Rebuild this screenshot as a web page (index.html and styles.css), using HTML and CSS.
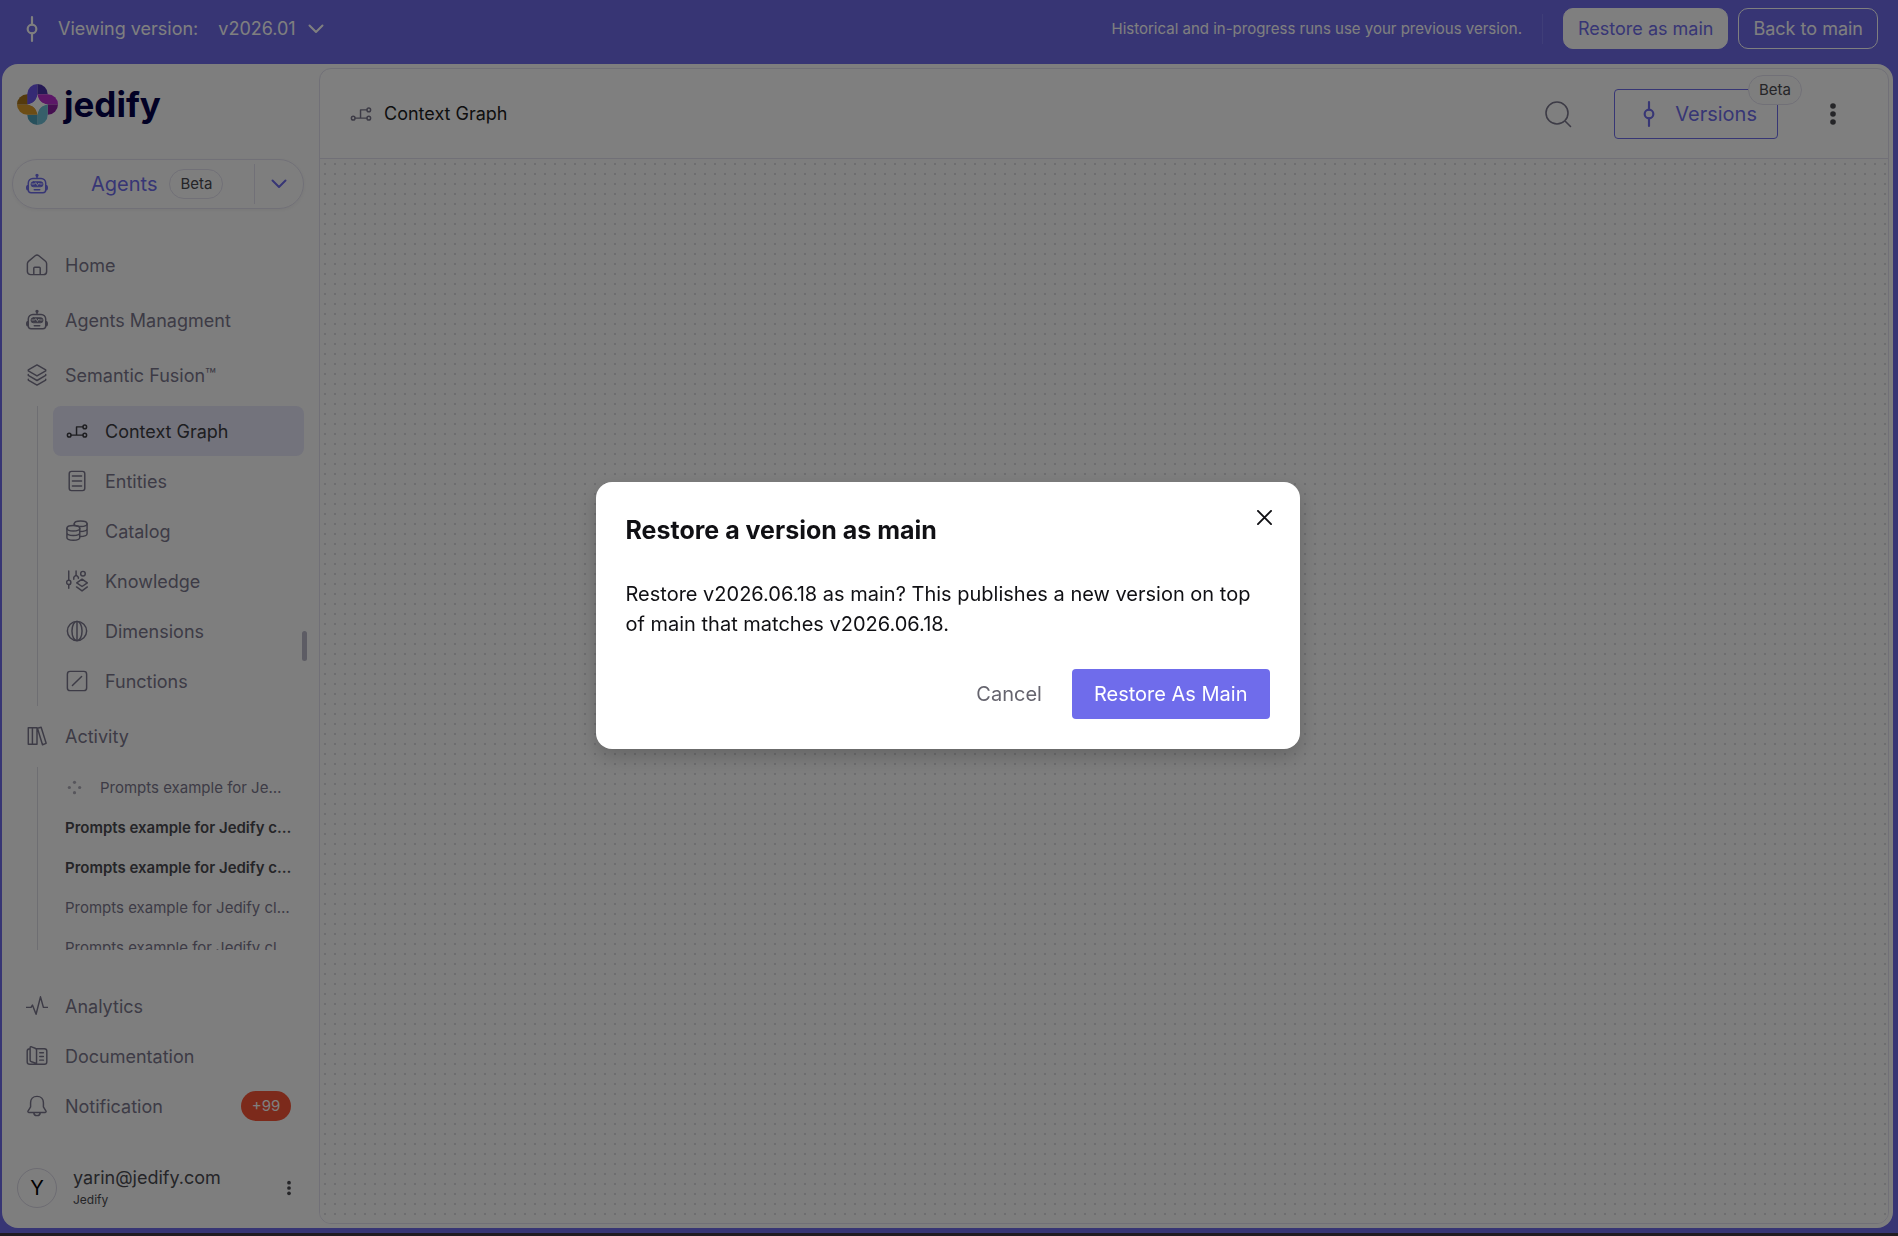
FILE: index.html
```html
<!DOCTYPE html>
<html lang="en">
<head>
<meta charset="utf-8">
<meta name="viewport" content="width=device-width, initial-scale=1">
<title>Jedify – Context Graph</title>
<link rel="stylesheet" href="styles.css">
</head>
<body>
<svg class="sprite" aria-hidden="true">
  <symbol id="i-commit" viewBox="0 0 24 24"><circle cx="12" cy="12" r="4"/><path d="M12 1v7M12 16v7"/></symbol>
  <symbol id="i-chevron" viewBox="0 0 16 10"><path d="M1.500 1.500 8 8l6.500-6.500"/></symbol>
  <symbol id="i-robot" viewBox="0 0 24 24"><circle cx="12" cy="2.500" r="1" fill="currentColor"/><path d="M12 3v3M7.500 6h9a5 5 0 0 1 5 5v7.500a3 3 0 0 1-3 3h-13a3 3 0 0 1-3-3V11a5 5 0 0 1 5-5zM2.500 13.500C.8 13.500.8 14.500.8 16s0 2.500 1.700 2.500M21.500 13.500c1.700 0 1.700 1 1.700 2.500s0 2.500-1.700 2.500M9 18.300h6"/><rect x="5.500" y="9.500" width="13" height="5.500" rx="2.500" fill="currentColor" stroke-width="1"/><path class="cut" d="M6.500 12h3l1.200-1.500 1.800 3 1.400-2.500.8 1h2.800"/></symbol>
  <symbol id="i-home" viewBox="0 0 24 24"><path d="M1.500 10.500c0-1.200.5-2 1.500-2.800l7-5.800c1.300-1 2.700-1 4 0l7 5.800c1 .8 1.500 1.600 1.500 2.800V19a3.500 3.500 0 0 1-3.500 3.500H5A3.500 3.500 0 0 1 1.500 19zM8.500 22.500v-7a1 1 0 0 1 1-1h5a1 1 0 0 1 1 1v7"/></symbol>
  <symbol id="i-layers" viewBox="0 0 24 24"><path d="M12 1 21.500 6.500v1L12 13 2.500 7.500v-1zM2.500 11.500v1L12 18l9.500-5.500v-1M2.500 16.500v1L12 23l9.500-5.500v-1"/></symbol>
  <symbol id="i-graph" viewBox="0 0 24 24"><circle cx="3.500" cy="16.500" r="2"/><circle cx="20.500" cy="16.500" r="2"/><circle cx="20.500" cy="7.500" r="2"/><path d="M5.500 16.500h13M11.500 16.500v-9h7"/></symbol>
  <symbol id="i-doc" viewBox="0 0 24 24"><rect x="3.500" y="1.500" width="17" height="21" rx="2.500"/><path d="M7 6.500h10M7 12h10M7 17.500h10"/></symbol>
  <symbol id="i-catalog" viewBox="0 0 24 24"><ellipse cx="8" cy="9" rx="7" ry="3"/><path d="M1 9v10c0 1.700 3 3 7 3s7-1.300 7-3V9M1 14c0 1.700 3 3 7 3s7-1.300 7-3M9 6V4"/><ellipse cx="16" cy="4" rx="7" ry="3"/><path d="M23 4v11c0 1.600-3 3-8 3M23 9.500c0 1.600-3 3-8 3"/></symbol>
  <symbol id="i-knowledge" viewBox="0 0 24 24"><path d="M3 1v10M3 16v4M11 1v4M8.500 10V8L11 5.500 13.500 8v1"/><circle cx="3" cy="13.500" r="2.300"/><circle cx="18.500" cy="4" r="2.500"/><path d="M17.500 10l5.800 4-5.800 4-5.800-4zM11.500 18.500l6 4.300 5.800-4.300"/></symbol>
  <symbol id="i-globe" viewBox="0 0 24 24"><circle cx="12" cy="12" r="10.500"/><ellipse cx="12" cy="12" rx="5.500" ry="10.500"/><path d="M12 1.500v21"/></symbol>
  <symbol id="i-function" viewBox="0 0 24 24"><rect x="1.500" y="1.500" width="21" height="21" rx="3"/><path d="M7 17 17 7"/></symbol>
  <symbol id="i-books" viewBox="0 0 24 24"><path d="M2.500 3h4.500v18H2.500zM7 3h5v18H7zM12.500 3.500l4-1 5.500 17.500-4 1.500z"/></symbol>
  <symbol id="i-dots4" viewBox="0 0 16 16"><g class="solid"><circle cx="8" cy="2.500" r="1.700"/><circle cx="8" cy="13.500" r="1.700"/><circle cx="2.500" cy="8" r="1.700"/><circle cx="13.500" cy="8" r="1.700"/></g></symbol>
  <symbol id="i-pulse" viewBox="0 0 24 24"><path d="M.500 13.500h5l1.500-2.500 4 10L15.800 2l3.200 11.500h4.500"/></symbol>
  <symbol id="i-docs" viewBox="0 0 24 24"><path d="M5 2h1l4 1.500c1 .4 1.500 1 1.500 2V20l-5.500-1.700C5 18 4.500 17.500 4.500 16.500V3c0-.6 0-1 .5-1zM4.500 4c-2 0-3.200 1-3.200 2.500v12c0 1.500 1.200 2.500 3 2.500H20c1.600 0 2.700-1 2.700-2.500v-12C22.700 5 21.600 4 20 4h-8.500M15 8.500h4M15 12.500h4M15 16.500h4"/></symbol>
  <symbol id="i-bell" viewBox="0 0 24 24"><path d="M12 1.500c-4.500 0-7 3.300-7 7v4.500l-2.800 4.500c-.4.800 0 1.500.8 1.500h18c.8 0 1.200-.7.8-1.500L19 13V8.500c0-3.700-2.500-7-7-7zM8.500 19c0 2 1.500 3.500 3.500 3.500s3.500-1.500 3.500-3.500"/></symbol>
  <symbol id="i-kebab" viewBox="0 0 8 24"><g class="solid"><circle cx="4" cy="4" r="2.800"/><circle cx="4" cy="12" r="2.800"/><circle cx="4" cy="20" r="2.800"/></g></symbol>
  <symbol id="i-search" viewBox="0 0 28 28"><circle cx="13" cy="13" r="11"/><path d="m21.500 21.500 5 5"/></symbol>
  <symbol id="i-close" viewBox="0 0 16 16"><path d="m1 1 14 14M15 1 1 15"/></symbol>
</svg>

<div class="app">
  <header class="banner">
    <svg class="icon commit"><use href="#i-commit"/></svg>
    <span class="banner-label">Viewing version:</span>
    <button class="version-pick" type="button">v2026.01 <svg class="chevron"><use href="#i-chevron"/></svg></button>
    <p class="banner-note">Historical and in-progress runs use your previous version.</p>
    <button class="banner-btn filled" type="button">Restore as main</button>
    <button class="banner-btn" type="button">Back to main</button>
  </header>

  <div class="shell">
    <aside class="sidebar">
      <a class="logo" href="#" aria-label="jedify">
        <svg class="logo-mark" viewBox="0 0 40 40">
          <path fill="#6b55e8" d="M10 20V10a10 10 0 0 1 10-10v10z"/>
          <path fill="#4a33a8" d="M20 0a10 10 0 0 1 10 10H20z"/>
          <path fill="#6b55e8" d="M10 20V10h10c0 5-4 10-10 10z"/>
          <path fill="#b92fce" d="M20 10h10a10 10 0 0 1 10 10H30c-5 0-10-4-10-10z"/>
          <path fill="#8a1fa0" d="M40 20a10 10 0 0 1-10 10V20z"/>
          <path fill="#6fbfd4" d="M30 20v10a10 10 0 0 1-10 10V30c0-6 4-10 10-10z"/>
          <path fill="#4fa0b8" d="M20 40a10 10 0 0 1-10-10h10z"/>
          <path fill="#d89a2b" d="M20 30H10A10 10 0 0 1 0 20h10c5 0 10 4 10 10z"/>
          <path fill="#a8741a" d="M0 20a10 10 0 0 1 10-10v10z"/>
          <path fill="#fff" d="M20 10c1 6 4 9 10 10-6 1-9 4-10 10-1-6-4-9-10-10 6-1 9-4 10-10z"/>
        </svg>
        <span>jedify</span>
      </a>

      <div class="agents">
        <button class="agents-main" type="button"><svg class="icon"><use href="#i-robot"/></svg><span class="agents-label">Agents</span><span class="beta">Beta</span></button>
        <button class="agents-more" type="button" aria-label="More agents"><svg class="chevron"><use href="#i-chevron"/></svg></button>
      </div>

      <nav class="nav">
        <a class="row" href="#"><svg class="icon"><use href="#i-home"/></svg>Home</a>
        <a class="row" href="#"><svg class="icon"><use href="#i-robot"/></svg>Agents Managment</a>
        <a class="row" href="#"><svg class="icon"><use href="#i-layers"/></svg>Semantic Fusion™</a>
        <div class="sub">
          <a class="row active" href="#"><svg class="icon"><use href="#i-graph"/></svg>Context Graph</a>
          <a class="row" href="#"><svg class="icon"><use href="#i-doc"/></svg>Entities</a>
          <a class="row" href="#"><svg class="icon"><use href="#i-catalog"/></svg>Catalog</a>
          <a class="row" href="#"><svg class="icon"><use href="#i-knowledge"/></svg>Knowledge</a>
          <a class="row" href="#"><svg class="icon"><use href="#i-globe"/></svg>Dimensions</a>
          <a class="row" href="#"><svg class="icon"><use href="#i-function"/></svg>Functions</a>
        </div>
        <a class="row" href="#"><svg class="icon"><use href="#i-books"/></svg>Activity</a>
        <div class="history">
          <a class="prompt pending" href="#"><svg class="spinner"><use href="#i-dots4"/></svg><span>Prompts example for Jedify clients</span></a>
          <a class="prompt unread" href="#"><span>Prompts example for Jedify clients</span></a>
          <a class="prompt unread" href="#"><span>Prompts example for Jedify clients</span></a>
          <a class="prompt" href="#"><span>Prompts example for Jedify clients</span></a>
          <a class="prompt" href="#"><span>Prompts example for Jedify clients</span></a>
        </div>
      </nav>

      <nav class="nav-foot">
        <a class="row" href="#"><svg class="icon"><use href="#i-pulse"/></svg>Analytics</a>
        <a class="row" href="#"><svg class="icon"><use href="#i-docs"/></svg>Documentation</a>
        <a class="row" href="#"><svg class="icon"><use href="#i-bell"/></svg>Notification<span class="count">+99</span></a>
      </nav>

      <div class="user">
        <span class="avatar">Y</span>
        <div class="user-text"><strong>yarin@jedify.com</strong><small>Jedify</small></div>
        <button class="kebab small" type="button" aria-label="Account menu"><svg><use href="#i-kebab"/></svg></button>
      </div>
      <span class="resize-handle"></span>
    </aside>

    <main class="panel">
      <header class="panel-head">
        <svg class="icon"><use href="#i-graph"/></svg>
        <h1>Context Graph</h1>
        <button class="search" type="button" aria-label="Search"><svg><use href="#i-search"/></svg></button>
        <button class="versions" type="button"><svg class="icon commit"><use href="#i-commit"/></svg>Versions<span class="beta">Beta</span></button>
        <button class="kebab" type="button" aria-label="More"><svg><use href="#i-kebab"/></svg></button>
      </header>
      <div class="canvas"></div>
    </main>
  </div>
  <div class="edge"></div>
</div>

<div class="overlay">
  <section class="dialog" role="dialog" aria-modal="true" aria-labelledby="dialog-title">
    <button class="close" type="button" aria-label="Close"><svg><use href="#i-close"/></svg></button>
    <h2 id="dialog-title">Restore a version as main</h2>
    <p>Restore v2026.06.18 as main? This publishes a new version on top of main that matches v2026.06.18.</p>
    <div class="dialog-actions">
      <button class="cancel" type="button">Cancel</button>
      <button class="confirm" type="button">Restore As Main</button>
    </div>
  </section>
</div>
</body>
</html>
```
FILE: styles.css
```css
:root {
  --purple: #6f6ceb;
  --banner: #6e6ae8;
  --muted: #7a778c;
  --line: #e2e0ee;
  --ink: #4a4a50;
}

* { box-sizing: border-box; }

body {
  margin: 0;
  font-family: Inter, "Liberation Sans", sans-serif;
  font-size: 18px;
  color: var(--muted);
}

h1, h2, p { margin: 0; font-weight: 400; }
a { color: inherit; text-decoration: none; }

button {
  font: inherit;
  color: inherit;
  background: none;
  border: 0;
  padding: 0;
}

svg {
  display: block;
  flex: none;
  fill: none;
  stroke: currentColor;
  stroke-width: 1.6;
  stroke-linecap: round;
  stroke-linejoin: round;
}

.sprite { position: absolute; width: 0; height: 0; }
.solid { fill: currentColor; stroke: none; }
.cut { stroke: #fff; stroke-width: 1; }
.icon { width: 22px; height: 22px; }
.icon.commit { width: 26px; height: 26px; stroke-width: 2; }
.chevron { width: 16px; height: 10px; stroke-width: 2; }

.app {
  height: 100vh;
  display: flex;
  flex-direction: column;
  background: var(--banner);
}

.edge { height: 3px; background: #201c22; margin-top: 5px; }

/* version banner */
.banner {
  display: flex;
  align-items: center;
  padding: 8px 20px 15px 19px;
  color: #fff;
}

.banner-label { margin: 0 20px 0 13px; }
.version-pick { display: flex; align-items: center; gap: 12px; }

.banner-note {
  margin-left: auto;
  padding-right: 20px;
  border-right: 1px solid #7f7cf0;
  line-height: 30px;
  font-size: 15px;
}

.banner-btn {
  height: 41px;
  padding: 0 14px;
  margin-left: 10px;
  border: 1px solid #fff;
  border-radius: 10px;
}

.banner-btn.filled { margin-left: 20px; background: #fff; color: var(--purple); }

/* shell */
.shell {
  flex: 1;
  min-height: 0;
  display: flex;
  margin: 0 5px 0 2px;
  padding: 4px 4px 4px 0;
  background: #fdfdfd;
  border-radius: 16px;
}

.sidebar {
  position: relative;
  width: 317px;
  flex: none;
  display: flex;
  flex-direction: column;
  padding: 15px 15px 0 10px;
}

.logo {
  display: flex;
  align-items: center;
  gap: 6px;
  height: 42px;
  padding-left: 5px;
  font-size: 35px;
  font-weight: 700;
  line-height: 38px;
  color: #04024a;
}

.logo-mark { width: 41px; height: 41px; stroke: none; }

.agents {
  display: flex;
  align-items: center;
  height: 50px;
  margin-top: 34px;
  border: 1px solid var(--line);
  border-radius: 25px;
  box-shadow: 0 1px 4px #0000000f;
  color: var(--purple);
}

.agents-main {
  flex: 1;
  display: flex;
  align-items: center;
  padding-left: 13px;
  font-size: 20px;
}

.agents-label { margin: 0 12px 0 43px; }
.agents-more { border-left: 1px solid var(--line); height: 40px; padding: 0 16px; }

.beta {
  padding: 0 10px;
  border: 1px solid var(--line);
  border-radius: 15px;
  background: #fdfdfd;
  color: var(--ink);
  font-size: 15px;
  line-height: 28px;
}

.nav { margin-top: 31px; }

.row {
  display: flex;
  align-items: center;
  gap: 17px;
  height: 50px;
  margin-bottom: 5px;
  padding: 0 13px 0 14px;
}

.sub {
  margin: 6px 0 5px 25px;
  padding-left: 15px;
  border-left: 1px solid #dddce4;
}

.sub .row { margin: 0; padding-left: 13px; }
.row.active { background: #e6e6f8; border-radius: 8px; color: #3c3c42; }

.history {
  height: 183px;
  overflow: hidden;
  margin: 6px 12px 0 25px;
  padding-left: 27px;
  border-left: 1px solid #dddce4;
}

.prompt { display: flex; align-items: center; height: 40px; font-size: 15px; }
.prompt span { overflow: hidden; text-overflow: ellipsis; white-space: nowrap; }
.prompt.unread { color: var(--ink); font-weight: 600; }
.prompt.pending { gap: 18px; padding: 0 8px 0 2px; }
.spinner { width: 15px; height: 15px; opacity: 0.6; }

.nav-foot { margin-top: 31px; }
.nav-foot .row { margin: 0; }

.count {
  margin-left: auto;
  width: 50px;
  border-radius: 15px;
  background: #f85436;
  color: #fff;
  font-size: 15px;
  line-height: 30px;
  text-align: center;
}

.user { display: flex; align-items: center; gap: 16px; margin: 35px 0 0 5px; }

.avatar {
  width: 40px;
  border: 1px solid #d9d7e4;
  border-radius: 50%;
  color: #000;
  font-size: 20px;
  line-height: 38px;
  text-align: center;
}

.user-text { flex: 1; color: var(--ink); }
.user-text strong { display: block; font-weight: 400; line-height: 24px; }
.user-text small { display: block; font-size: 12px; line-height: 20px; }

.kebab { color: var(--ink); }
.kebab svg { width: 8px; height: 24px; }
.kebab.small svg { width: 6px; height: 16px; }
.kebab.small { margin-right: 12px; }

.resize-handle {
  position: absolute;
  right: 12px;
  top: 50%;
  width: 5px;
  height: 30px;
  margin-top: -15px;
  border-radius: 3px;
  background: #bab8c8;
}

/* main panel */
.panel {
  flex: 1;
  min-width: 0;
  display: flex;
  flex-direction: column;
  border: 1px solid var(--line);
  border-radius: 12px;
  overflow: hidden;
  background: #fff;
}

.panel-head {
  display: flex;
  align-items: center;
  height: 90px;
  padding: 0 51px 0 30px;
  border-bottom: 1px solid var(--line);
}

.panel-head h1 { margin: 0 auto 0 12px; font-size: 18px; color: #1c1c20; }
.search svg { width: 28px; height: 28px; }

.versions {
  position: relative;
  display: flex;
  align-items: center;
  gap: 13px;
  height: 50px;
  margin: 0 51px 0 42px;
  padding: 0 20px 0 21px;
  border: 1px solid var(--purple);
  border-radius: 4px;
  color: var(--purple);
  font-size: 20px;
}

.versions .beta { position: absolute; top: -15px; right: -25px; }

.canvas {
  flex: 1;
  background: #fdfdfd radial-gradient(circle at 5px 5px, #dcdce0 1px, transparent 1px) 0 0 / 10px 10px;
}

/* dialog */
.overlay {
  position: fixed;
  inset: 0 0 3px;
  display: flex;
  align-items: center;
  justify-content: center;
  padding: 0 3px 3px 0;
  background: rgb(0 0 0 / 50%);
}

.dialog {
  position: relative;
  width: 704px;
  max-width: 90%;
  padding: 30px;
  border-radius: 16px;
  background: #fff;
  box-shadow: 0 8px 20px #00000033;
  color: #101014;
}

.dialog h2 { font-size: 25px; font-weight: 700; line-height: 36px; }
.dialog p { margin: 31px 0 30px; font-size: 20px; line-height: 30px; }
.dialog-actions { display: flex; justify-content: flex-end; gap: 30px; font-size: 20px; }
.cancel { color: #65646e; }
.confirm { height: 50px; padding: 0 22px; border-radius: 4px; background: var(--purple); color: #fff; }
.close { position: absolute; top: 28px; right: 28px; }
.close svg { width: 15px; height: 15px; stroke-width: 2; }
```
